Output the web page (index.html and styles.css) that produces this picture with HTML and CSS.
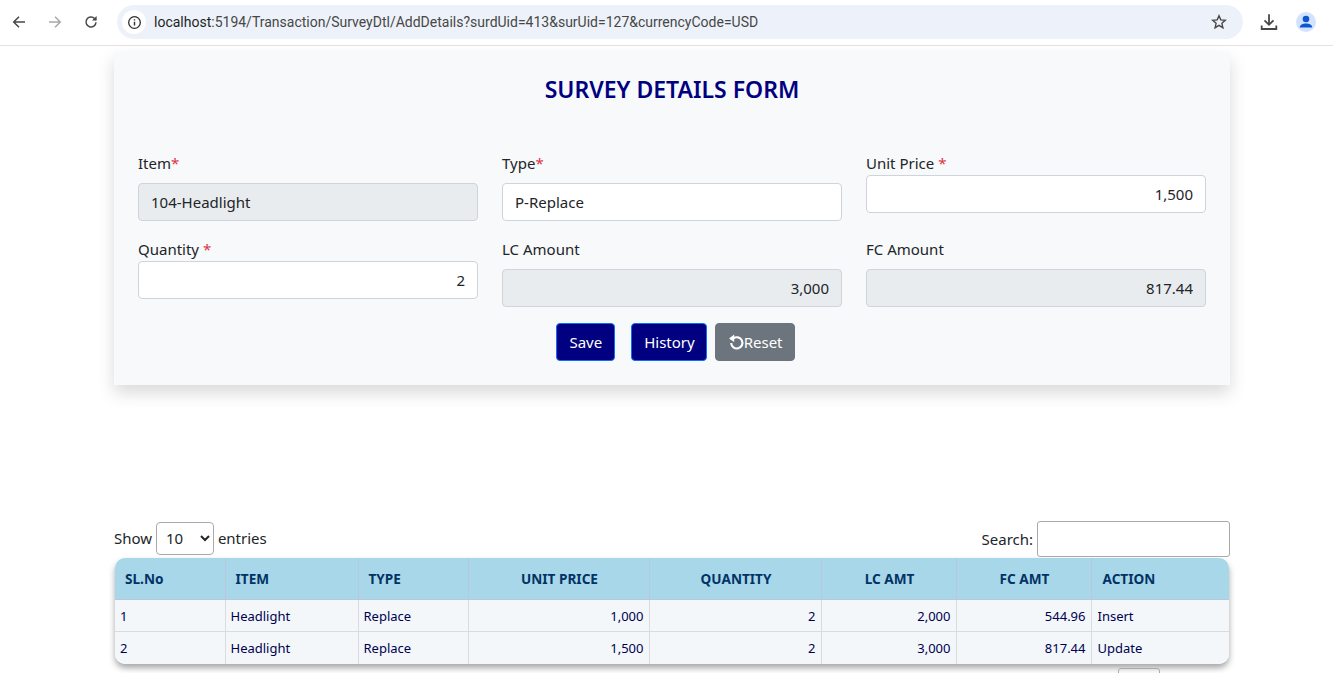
FILE: index.html
```html
<!DOCTYPE html>
<html>
	<head>
		<title>Survey Details</title>
		<link rel="stylesheet" href="styles.css">
	</head>
	<body>
		<div class="toolbar">
			<svg class="tool-icon" viewBox="0 0 16 16"><path d="M14 8H3M8 2.7 2.7 8 8 13.3" fill="none" stroke="#474747" stroke-width="1.5"/></svg>
			<svg class="tool-icon" viewBox="0 0 16 16"><path d="M2 8h11M8 2.7 13.3 8 8 13.3" fill="none" stroke="#a8a8a8" stroke-width="1.5"/></svg>
			<svg class="tool-icon" viewBox="0 0 16 16"><path d="M13 8.2A5 5 0 1 1 11.6 4.5L13 6" fill="none" stroke="#474747" stroke-width="1.5"/><path d="M13.6 2v4.6H9z" fill="#474747"/></svg>
			<div class="address">
				<span class="site-info">
					<svg viewBox="0 0 16 16" width="15" height="15"><circle cx="8" cy="8" r="6.2" fill="none" stroke="#303030" stroke-width="1.4"/><path d="M8 7.2v4M8 4.5v1.4" stroke="#303030" stroke-width="1.5"/></svg>
				</span>
				<span class="url"><b>localhost</b>:5194/Transaction/SurveyDtl/AddDetails?surdUid=413&amp;surUid=127&amp;currencyCode=USD</span>
				<svg class="star" viewBox="0 0 16 16" width="16" height="16"><path d="M8 1.8l1.8 4.1 4.5.4-3.4 3 1 4.4L8 11.4l-3.9 2.3 1-4.4-3.4-3 4.5-.4z" fill="none" stroke="#474747" stroke-width="1.4"/></svg>
			</div>
			<svg class="download" viewBox="0 0 16 16" width="18" height="18"><path d="M8 1v9M4 6.5 8 10.5l4-4M1.5 11v3.2h13V11" fill="none" stroke="#474747" stroke-width="1.6"/></svg>
			<span class="avatar">
				<svg viewBox="0 0 20 20" width="20" height="20"><circle cx="10" cy="7" r="3.3" fill="#0b57d0"/><path d="M3.8 15.5c0-2.6 3-4 6.2-4s6.200 1.400 6.200 4z" fill="#0b57d0"/></svg>
			</span>
		</div>

		<div class="page">
			<div class="card">
				<h2 class="card-title">SURVEY DETAILS FORM</h2>
				<div class="form-grid">
					<div class="field">
						<label class="label-gap">Item<span class="req">*</span></label>
						<input type="text" class="control" value="104-Headlight" disabled>
					</div>
					<div class="field">
						<label class="label-gap">Type<span class="req">*</span></label>
						<input type="text" class="control" value="P-Replace">
					</div>
					<div class="field">
						<label>Unit Price <span class="req">*</span></label>
						<input type="text" class="control num" value="1,500">
					</div>
					<div class="field">
						<label>Quantity <span class="req">*</span></label>
						<input type="text" class="control num" value="2">
					</div>
					<div class="field">
						<label class="label-gap">LC Amount</label>
						<input type="text" class="control num" value="3,000" disabled>
					</div>
					<div class="field">
						<label class="label-gap">FC Amount</label>
						<input type="text" class="control num" value="817.44" disabled>
					</div>
				</div>
				<div class="actions">
					<button class="btn btn-navy">Save</button>
					<button class="btn btn-navy btn-history">History</button>
					<button class="btn btn-grey">
						<svg class="reset-icon" viewBox="0 0 16 16" width="17" height="17"><path d="M3 8.500A5.300 5.300 0 1 0 5 4.200H2.500" fill="none" stroke="#fff" stroke-width="2"/><path d="M5.800 .4v7.200L1 4.200z" fill="#fff"/></svg>Reset
					</button>
				</div>
			</div>

			<div class="table-top">
				<div class="show">Show
					<select class="entries"><option>10</option></select>
					entries
				</div>
				<div class="search">Search: <input type="text" class="search-box"></div>
			</div>

			<div class="table-wrap">
				<table class="grid">
					<colgroup>
						<col class="c-sl"><col class="c-item"><col class="c-type"><col class="c-price"><col class="c-qty"><col class="c-lc"><col class="c-fc"><col class="c-action">
					</colgroup>
					<thead>
						<tr>
							<th>SL.No</th>
							<th>ITEM</th>
							<th>TYPE</th>
							<th class="mid">UNIT PRICE</th>
							<th class="mid">QUANTITY</th>
							<th class="mid">LC AMT</th>
							<th class="mid">FC AMT</th>
							<th>ACTION</th>
						</tr>
					</thead>
					<tbody>
						<tr>
							<td>1</td><td>Headlight</td><td>Replace</td><td class="right">1,000</td><td class="right">2</td><td class="right">2,000</td><td class="right">544.96</td><td>Insert</td>
						</tr>
						<tr>
							<td>2</td><td>Headlight</td><td>Replace</td><td class="right">1,500</td><td class="right">2</td><td class="right">3,000</td><td class="right">817.44</td><td>Update</td>
						</tr>
					</tbody>
				</table>
			</div>

			<div class="pager">
				<span class="page-num"></span>
			</div>
		</div>
	</body>
</html>
```

FILE: styles.css
```css
html, body {
	height: 100%;
	overflow: hidden;
}

body {
	margin: 0;
	background: #fff;
	color: #212529;
	font-family: "Noto Sans", sans-serif;
	font-size: 15px;
}

.toolbar {
	display: flex;
	align-items: center;
	height: 44px;
	padding: 0 0 1px 11px;
	border-bottom: 1px solid #e3e3e3;
}

.tool-icon {
	width: 16px;
	height: 16px;
	margin-right: 20px;
	flex: none;
}

.address {
	display: flex;
	align-items: center;
	width: 1126px;
	height: 34px;
	margin-left: -2px;
	background: #edf2fa;
	border-radius: 17px;
	padding: 0 16px 0 5px;
	box-sizing: border-box;
	flex: none;
}

.site-info {
	display: flex;
	align-items: center;
	justify-content: center;
	width: 24px;
	height: 24px;
	border-radius: 50%;
	background: #fff;
	flex: none;
}

.url {
	flex: 1;
	margin-left: 8px;
	font-family: "Roboto", sans-serif;
	font-size: 14px;
	color: #474747;
}

.url b {
	font-weight: 400;
	color: #1f1f1f;
}

.download {
	margin-left: 17px;
	flex: none;
}

.avatar {
	display: flex;
	align-items: center;
	justify-content: center;
	width: 20px;
	height: 20px;
	margin-left: 18px;
	border-radius: 50%;
	background: #d3e3fd;
	flex: none;
}

.page {
	width: 1116px;
	margin-left: 114px;
}

.card {
	margin-top: 6px;
	height: 333px;
	padding: 23px 24px 24px;
	box-sizing: border-box;
	background: #f8f9fa;
	box-shadow: 0 8px 16px rgba(0, 0, 0, .15);
}

.card-title {
	margin: 0 0 47px;
	height: 29px;
	line-height: 29px;
	text-align: center;
	color: #000080;
	font-size: 23px;
	font-weight: 600;
}

.form-grid {
	display: grid;
	grid-template-columns: repeat(3, 340px);
	column-gap: 24px;
	row-gap: 16px;
}

.field label {
	display: block;
	line-height: 24px;
}

.field .label-gap {
	margin-bottom: 8px;
}

.req {
	color: #dc3545;
}

.control {
	display: block;
	width: 100%;
	height: 38px;
	padding: 6px 12px;
	box-sizing: border-box;
	border: 1px solid #ced4da;
	border-radius: 4px;
	background: #fff;
	color: #212529;
	font: inherit;
}

.control:disabled {
	background: #e9ecef;
	opacity: 1;
}

.num {
	text-align: right;
}

.actions {
	display: flex;
	justify-content: center;
	margin-top: 16px;
	padding-left: 7px;
}

.btn {
	display: flex;
	align-items: center;
	height: 38px;
	padding: 0 12px;
	border: 1px solid transparent;
	border-radius: 4px;
	color: #fff;
	font: inherit;
}

.btn-navy {
	background: #000080;
	border-color: #0d6efd;
}

.btn-history {
	margin: 0 8px 0 16px;
	padding-right: 11px;
}

.btn-grey {
	padding-right: 11px;
	background: #6c757d;
	border-color: #6c757d;
}

.reset-icon {
	margin-right: -1px;
}

.table-top {
	display: flex;
	justify-content: space-between;
	align-items: flex-start;
	margin-top: 136px;
	height: 37px;
}

.show {
	line-height: 34px;
}

.entries {
	width: 58px;
	height: 33px;
	padding: 0 4px 0 5px;
	margin: 0;
	border: 1px solid #aaa;
	border-radius: 4px;
	background: #fff;
	color: #212529;
	font: inherit;
}

.search {
	line-height: 36px;
}

.search-box {
	width: 193px;
	height: 36px;
	padding: 0;
	box-sizing: border-box;
	border: 1px solid #aaa;
	border-radius: 3px;
	vertical-align: top;
}

.table-wrap {
	margin: 0 1px;
	border-radius: 10px;
	overflow: hidden;
	box-shadow: 0 4px 6px rgba(0, 0, 0, .35);
}

.grid {
	width: 100%;
	table-layout: fixed;
	border-collapse: collapse;
	font-size: 13px;
	color: #000050;
	background: #f3f7fa;
}

.c-sl { width: 110px; }
.c-item { width: 133px; }
.c-type { width: 110px; }
.c-price { width: 181px; }
.c-qty { width: 172px; }
.c-lc { width: 135px; }
.c-fc { width: 135px; }

.grid th {
	height: 41px;
	padding: 0 10px;
	background: #a8d7ea;
	color: #023365;
	text-align: left;
	font-size: 13.6px;
	font-weight: 700;
	border-right: 1px solid #b9c6dc;
	border-bottom: 1px solid #b9c6dc;
}

.grid th.mid {
	padding-left: 12px;
	text-align: center;
}

.grid td {
	height: 31px;
	padding: 0 5px;
	border-right: 1px solid #d8dbe0;
	border-bottom: 1px solid #d8dbe0;
}

.grid th:last-child,
.grid td:last-child {
	border-right: 0;
	padding-left: 6px;
}

.grid th:last-child {
	padding-left: 11px;
}

.grid tr:last-child td {
	height: 32px;
	border-bottom: 0;
}

.grid .right {
	text-align: right;
}

.pager {
	display: flex;
	justify-content: flex-end;
	margin-top: 4px;
	padding-right: 70px;
}

.page-num {
	width: 42px;
	height: 30px;
	box-sizing: border-box;
	border: 1px solid #aaa;
	border-radius: 3px;
}
```
